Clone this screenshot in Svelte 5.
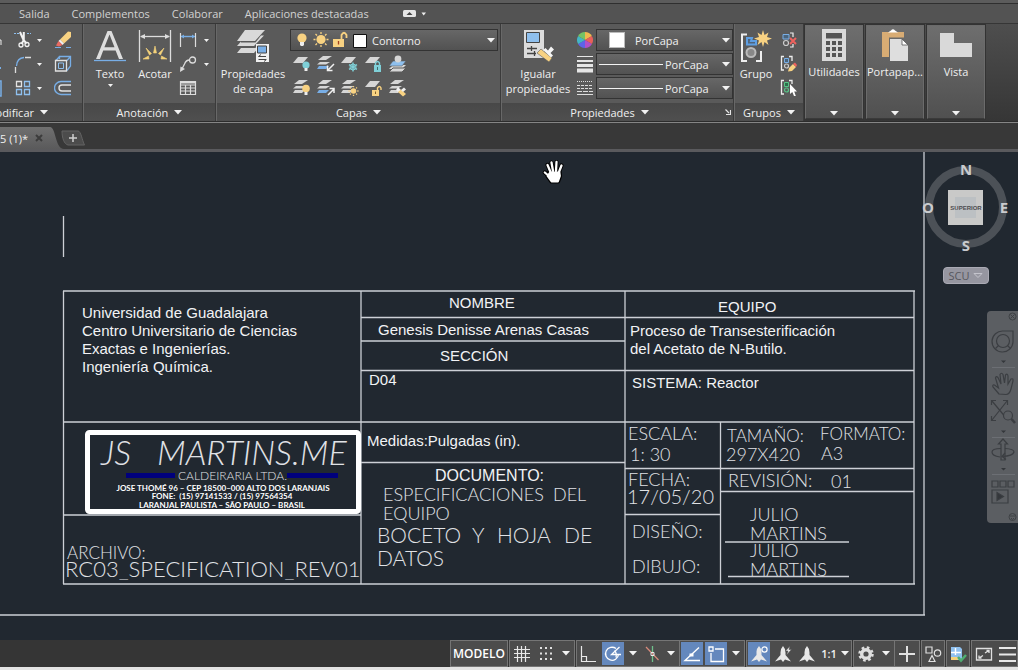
<script>
  const tabs = ['Salida', 'Complementos', 'Colaborar', 'Aplicaciones destacadas'];
  const layerTools = ['bulb-off', 'prev', 'freeze', 'lock', 'current', 'bulb-on', 'next', 'thaw', 'unlock', 'match'];

  // Line work of the title block: x1, y1, x2, y2
  const lines = [
    [63, 291, 915, 291], [63, 584, 915, 584], [63.5, 291, 63.5, 584], [914, 291, 914, 584],
    [361, 291, 361, 584], [625, 291, 625, 584], [720.5, 422, 720.5, 584],
    [361, 317.5, 914, 317.5], [361, 341, 625, 341], [361, 370.5, 914, 370.5], [63, 422, 914, 422],
    [361, 462.5, 625, 462.5], [625, 468.5, 914, 468.5], [720, 491.5, 914, 491.5], [625, 514.5, 720, 514.5],
    [63, 515, 361, 515], [725, 542, 849, 542], [728, 576.5, 849, 576.5],
    [63.5, 216, 63.5, 257], [924, 152, 924, 615], [0, 615, 925, 615]
  ];

  // Annotations in the Arial text style: x, baseline, size, text
  const arial = [
    [82, 318, 15, 'Universidad de Guadalajara'],
    [82, 336, 15, 'Centro Universitario de Ciencias'],
    [82, 354, 15, 'Exactas e Ingenierías.'],
    [82, 372, 15, 'Ingeniería Química.'],
    [449, 308, 15, 'NOMBRE'],
    [378, 335, 15, 'Genesis Denisse Arenas Casas'],
    [440, 361, 15, 'SECCIÓN'],
    [369, 385, 15, 'D04'],
    [367, 446, 15, 'Medidas:Pulgadas (in).'],
    [435, 481, 16, 'DOCUMENTO:'],
    [718, 312, 15, 'EQUIPO'],
    [630, 336, 15, 'Proceso de Transesterificación'],
    [630, 354, 15, 'del Acetato de N-Butilo.'],
    [632, 388, 15, 'SISTEMA: Reactor']
  ];

  // Annotations in the single-stroke text style
  const stroke = [
    [67, 559, 17, 'ARCHIVO:'],
    [65, 577, 22, 'RC03_SPECIFICATION_REV01'],
    [383, 501, 18, 'ESPECIFICACIONES'], [553, 501, 18, 'DEL'],
    [383, 520, 18, 'EQUIPO'],
    [377, 543, 21, 'BOCETO'], [472, 543, 21, 'Y'], [497, 543, 21, 'HOJA'], [564, 543, 21, 'DE'],
    [377, 566, 21, 'DATOS'],
    [628, 440, 18, 'ESCALA:'], [630, 461, 18, '1: 30'],
    [628, 486, 18, 'FECHA:'], [627, 504, 20, '17/05/20'],
    [632, 538, 18, 'DISEÑO:'], [632, 573, 18, 'DIBUJO:'],
    [727, 442, 17, 'TAMAÑO:'], [726, 461, 18, '297X420'],
    [820, 440, 17, 'FORMATO:'], [821, 460, 18, 'A3'],
    [728, 487, 18, 'REVISIÓN:'], [831, 488, 18, '01'],
    [750, 521, 18, 'JULIO'], [750, 540, 18, 'MARTINS'],
    [750, 557, 18, 'JULIO'], [750, 576, 18, 'MARTINS']
  ];
</script>

{#snippet caret()}
  <svg class="caret" width="8" height="5" viewBox="0 0 8 5" aria-hidden="true"><path d="M0 0H8L4 4.5Z" fill="#f2f2f2" /></svg>
{/snippet}

{#snippet caretSmall()}
  <svg class="caret" width="5" height="3" viewBox="0 0 5 3" aria-hidden="true"><path d="M0 0H5L2.5 3Z" fill="#f2f2f2" /></svg>
{/snippet}

{#snippet bulb(color)}
  <circle cx="5" cy="5" r="4.6" fill={color} /><path d="M3 9H7V12L6 13H4L3 12Z" fill="#eee" />
{/snippet}

{#snippet layerTool(kind)}
  <svg width="18" height="18" viewBox="0 0 18 18" aria-hidden="true">
    {#if kind === 'bulb-off' || kind === 'freeze' || kind === 'lock' || kind === 'unlock'}
      <path d="M5 2H15L10 8H0Z" fill="#d6d6d6" />
    {:else if kind === 'current'}
      <path d="M4 10H17L13 14H0Z" fill="#d6d6d6" /><path d="M4 13H17L13 17H0Z" fill="#d6d6d6" stroke="#5a5a5a" />
      <path d="M4 6H17L13 11H0Z" fill="#8fc0ee" stroke="#5a5a5a" stroke-width=".6" />
      <circle cx="9" cy="4" r="3.4" fill="#d6d6d6" />
    {:else}
      <path d="M6 1H15L9 5H1Z" fill="#d6d6d6" /><path d="M3 7H13L9 9.500H0Z" fill="#d6d6d6" />
      <path d="M2 11H12L9 14H0Z" fill={kind === 'prev' || kind === 'next' ? '#78aee6' : '#d6d6d6'} />
    {/if}
    {#if kind === 'bulb-off'}
      <circle cx="13" cy="10" r="3.600" fill="#7fd0d8" /><path d="M11.500 13H14.500V16H11.500Z" fill="#eee" />
    {:else if kind === 'bulb-on'}
      <circle cx="13" cy="9.500" r="3.800" fill="#f8d282" /><path d="M11.500 13H14.500V16H11.500Z" fill="#eee" />
    {:else if kind === 'prev'}
      <path d="M17 9L11 15M10.500 10.500V15.500H15.500" stroke="#f2f2f2" stroke-width="1.500" fill="none" />
    {:else if kind === 'next'}
      <path d="M11 16L17 10M12.500 9.500H17V14" stroke="#f2f2f2" stroke-width="1.500" fill="none" />
    {:else if kind === 'freeze'}
      <circle cx="12" cy="12" r="3" fill="none" stroke="#7fd0d8" />
      <path d="M12 7.500V16.500M8 9.700L16 14.300M8 14.300L16 9.700" stroke="#7fd0d8" stroke-width="1.400" />
    {:else if kind === 'thaw'}
      <circle cx="12.500" cy="12" r="2.800" fill="#f8d282" />
      <path d="M12.500 7V8.200M12.500 15.800V17M7.500 12H8.700M16.300 12H17.500M9 8.500L9.900 9.400M15.100 14.600L16 15.500M9 15.500L9.900 14.600M15.100 9.400L16 8.500" stroke="#f8d282" stroke-width="1.300" />
    {:else if kind === 'lock'}
      <path d="M9 10H16V17H9Z" fill="#7fd0d8" /><path d="M10.500 10V8Q12.500 5 14.500 8V10" fill="none" stroke="#7fd0d8" stroke-width="1.400" />
      <path d="M12.500 12V15" stroke="#3f6b70" />
    {:else if kind === 'unlock'}
      <path d="M7 11H14V17H7Z" fill="#f8d282" /><path d="M12.500 11V9Q14.500 6 16 9V11" fill="none" stroke="#f8d282" stroke-width="1.400" />
      <path d="M10.500 12.500V15" stroke="#80602a" />
    {:else if kind === 'match'}
      <path d="M9 8L12 11L9 13L7 11Z" fill="#f2f2f2" /><path d="M9 13L12 10.500L17 15L14 17.500Z" fill="#f8d282" /><path d="M12 11L15 8.500L17 10.500L14 13Z" fill="#eee" />
    {/if}
  </svg>
{/snippet}

{#snippet anno(extra)}
  <svg width="22" height="22" viewBox="0 0 22 22" aria-hidden="true">
    <path d="M11 3Q13.800 6 13.500 9.500V12L19 18.500L13 16.500L11 19L9 16.500L3 18.500L8.500 12V9.500Q8.200 6 11 3Z" fill="#e8e8e8" />
    {#if extra === 'eye'}<circle cx="16.500" cy="6.500" r="2.600" fill="#6488bd" stroke="#fff" stroke-width="1.200" />{/if}
    {#if extra === 'bolt'}<path d="M18 3L13.500 8H16L14.500 12L19.500 6.500H17Z" fill="#e8e8e8" stroke="#4c4c4c" stroke-width=".5" />{/if}
  </svg>
{/snippet}

<div class="app">
  <div class="edge"></div>
  <nav class="tabs" aria-label="Fichas">
    {#each tabs as t}<a href="#ribbon">{t}</a>{/each}
    <button class="minimize" aria-label="Minimizar">
      <svg width="24" height="9" viewBox="0 0 24 9"><rect y="1" width="13" height="7" rx="1.500" fill="#e6e6e6" /><path d="M3.500 6H9.500L6.500 3Z" fill="#444" /><path d="M18.500 3.500H23L20.700 6.500Z" fill="#eee" /></svg>
    </button>
  </nav>

  <div class="ribbon" id="ribbon">
    <section class="panel modify">
      <div class="body tools">
        <svg width="11" height="72" viewBox="0 0 11 72" aria-hidden="true">
          <path d="M0 12H1V17" stroke="#eee" fill="none" /><path d="M0 40H1" stroke="#78aee6" stroke-width="2" /><path d="M0 53H1V68H0" stroke="#78aee6" stroke-width="1.500" fill="none" />
        </svg>
        <div class="col">
          <button aria-label="Recortar"><svg width="18" height="18" viewBox="0 0 18 18">
            <path d="M0 2.500H6M13 2.500H17" stroke="#8fc0ee" stroke-dasharray="2 1" /><path d="M6 1L9.500 9L12.500 12.500M9.800 1V9L7.500 13" stroke="#f2f2f2" stroke-width="2" fill="none" />
            <circle cx="7" cy="14" r="2" fill="none" stroke="#f2f2f2" stroke-width="1.300" /><circle cx="13" cy="13.500" r="2" fill="none" stroke="#f2f2f2" stroke-width="1.300" /></svg></button>
          <button aria-label="Empalme"><svg width="18" height="18" viewBox="0 0 18 18">
            <path d="M2.500 11Q3 3 10 2.500" fill="none" stroke="#78aee6" stroke-width="1.300" /><path d="M1.500 12V18M11 2.500H17" stroke="#ddd" stroke-width="1.300" /></svg></button>
          <button aria-label="Matriz"><svg width="18" height="18" viewBox="0 0 18 18">
            <path d="M2.500 2.500H7.500V7.500H2.500Z" fill="none" stroke="#e2e2e2" stroke-width="1.300" /><path d="M10.500 2.500H15.500V7.500H10.500ZM2.500 10.500H7.500V15.500H2.500ZM10.500 10.500H15.500V15.500H10.500Z" fill="none" stroke="#8fc0ee" stroke-width="1.300" /></svg></button>
        </div>
        <div class="col carets">
          <button aria-label="Más recortar">{@render caretSmall()}</button>
          <button aria-label="Más empalme">{@render caretSmall()}</button>
          <button aria-label="Más matriz">{@render caretSmall()}</button>
        </div>
        <div class="col">
          <button aria-label="Borrar"><svg width="18" height="18" viewBox="0 0 18 18">
            <path d="M1 16.500H7M12 16.500H17" stroke="#78aee6" /><path d="M14 0.500L17 1V6L10 12.500L6 8.500Z" fill="#f8d282" /><path d="M6 8.500L10 12.500L8.500 14L4.500 10Z" fill="#f2f2f2" /><path d="M4.500 10L8.500 14L5 15.500L2 14.500Z" fill="#ea6a62" /></svg></button>
          <button aria-label="Descomponer"><svg width="18" height="18" viewBox="0 0 18 18">
            <path d="M5.500 4V1.500H16.500V11L13 15.500M2 5.500L5.500 1.500M13 5.500L16.500 1.500" fill="none" stroke="#78aee6" stroke-width="1.300" /><path d="M1.500 5.500H12.500V16H1.500Z" fill="none" stroke="#e2e2e2" stroke-width="1.300" /><path d="M4.500 8H9.500V13.500H4.500Z" fill="none" stroke="#8fc0ee" /></svg></button>
          <button aria-label="Desfase"><svg width="18" height="18" viewBox="0 0 18 18">
            <path d="M17 2.500H7A6 6 0 0 0 7 15.500H17" fill="none" stroke="#78aee6" stroke-width="1.400" /><path d="M17 6H8A3 3 0 0 0 8 12H17" fill="none" stroke="#e2e2e2" stroke-width="1.400" /></svg></button>
        </div>
      </div>
      <button class="title">Modificar {@render caret()}</button>
    </section>

    <section class="panel annotate">
      <div class="body">
        <button class="big text">
          <svg width="34" height="34" viewBox="0 0 34 34"><path d="M3 30L14.500 2H18.500L30 30H26L22.600 21.500H10.200L7 30ZM11.400 18.300H21.500L16.500 5.500Z" fill="#dedede" fill-rule="evenodd" /><path d="M1 31.500H33" stroke="#78aee6" stroke-width="1.300" /></svg>
          <span>Texto</span>{@render caretSmall()}
        </button>
        <button class="big dim">
          <svg width="34" height="34" viewBox="0 0 34 34"><path d="M1.500 1V33M32.500 1V33" stroke="#ddd" stroke-width="1.300" /><path d="M3 7.500H31" stroke="#ddd" stroke-width="1.300" /><path d="M2 7.500L7 5V10ZM32 7.500L27 5V10Z" fill="#ddd" />
            <path d="M17 17L18.500 24H15.500ZM8 19L13.500 24.500L11.500 26ZM26 19L20.500 24.500L22.500 26ZM5 30L10.500 27L11 30ZM29 30L23.500 27L23 30Z" fill="#f4d27a" stroke="#f4d27a" stroke-width=".6" /></svg>
          <span>Acotar</span>
        </button>
        <div class="col">
          <button aria-label="Cota lineal"><svg width="18" height="18" viewBox="0 0 18 18"><path d="M1.500 2V16M16.500 2V16" stroke="#ddd" stroke-width="1.200" /><path d="M2 5.500H16" stroke="#78aee6" stroke-width="1.400" /><path d="M2 5.500L5 3.500V7.500ZM16 5.500L13 3.500V7.500Z" fill="#78aee6" /></svg></button>
          <button aria-label="Directriz"><svg width="18" height="18" viewBox="0 0 18 18"><circle cx="13.500" cy="5" r="3" fill="none" stroke="#ddd" stroke-width="1.300" /><path d="M10.500 5Q7 5 5.500 9L3 14" fill="none" stroke="#ddd" stroke-width="1.300" /><path d="M1 17L1.500 11.500L6 14Z" fill="#ddd" /></svg></button>
          <button aria-label="Tabla"><svg width="18" height="18" viewBox="0 0 18 18"><path d="M1.500 2.500H16.500V15.500H1.500ZM1.500 6H16.500M1.500 9H16.500M1.500 12H16.500M6.500 6V15.500M11.500 6V15.500" fill="none" stroke="#ddd" stroke-width="1.200" /><path d="M1.500 3.500H16.500" stroke="#ddd" stroke-width="2" /></svg></button>
        </div>
        <div class="col carets">
          <button aria-label="Más cotas">{@render caretSmall()}</button>
          <button aria-label="Más directrices">{@render caretSmall()}</button>
        </div>
      </div>
      <button class="title">Anotación {@render caret()}</button>
    </section>

    <section class="panel layers">
      <div class="body">
        <button class="big wide">
          <svg width="34" height="34" viewBox="0 0 34 34"><path d="M9 1H29L19 12H1Z" fill="#d9d9d9" /><path d="M5 12.500L1 17H18L28 6.500H25L19.500 13.500H5Z" fill="#d9d9d9" /><path d="M5 19L1 24H18L22 19.500V15L19.500 19Z" fill="#d9d9d9" />
            <path d="M20 15H33V33H20Z" fill="#efefef" /><path d="M21.500 17H30.500V24H21.500Z" fill="#78aee6" stroke="#444" /><path d="M22.500 27.500H30M22.500 30.500H30M25 25.500L22.500 27.500M28 32.500L30.500 30.500" stroke="#444" /></svg>
          <span>Propiedades<br />de capa</span>
        </button>
        <div class="layerside">
          <div class="combo">
            <svg width="72" height="18" viewBox="0 0 72 18" aria-hidden="true">
              <g transform="translate(2 2)">{@render bulb('#f8d282')}</g>
              <circle cx="26" cy="8.500" r="4.600" fill="#f8d282" /><path d="M26 1V3M26 14V16M18.500 8.500H20.500M31.500 8.500H33.500M20.500 3L22 4.500M31.500 3L30 4.500M20.500 14L22 12.500M31.500 14L30 12.500" stroke="#f8d282" stroke-width="1.300" />
              <path d="M38 8H49V16H38Z" fill="#f8d282" /><path d="M46.500 8V4Q49 -0.500 51.500 4V7" fill="none" stroke="#f8d282" stroke-width="1.800" /><path d="M43.500 10V13.500" stroke="#a04020" stroke-width="1.300" />
              <path d="M58.500 3.500H71.500V16.500H58.500Z" fill="#fff" stroke="#111" />
            </svg>
            <select aria-label="Capa"><option>Contorno</option></select>
            {@render caret()}
          </div>
          <div class="layergrid">
            {#each layerTools as k}<button aria-label={k}>{@render layerTool(k)}</button>{/each}
          </div>
        </div>
      </div>
      <button class="title">Capas {@render caret()}</button>
    </section>

    <section class="panel props">
      <div class="body">
        <button class="big wide">
          <svg width="34" height="34" viewBox="0 0 34 34"><path d="M3 1H23V29H3Z" fill="#dcdcdc" /><path d="M5.500 3.500H18.500V13.500H5.500Z" fill="#8fc0ee" stroke="#444" /><path d="M6 19.500H16M6 24.500H15M10.500 17V22M13.500 22V27" stroke="#444" stroke-width="1.300" />
            <path d="M16 24L20 20L31 29L28 33Z" fill="#f8d282" stroke="#5a5a5a" stroke-width=".6" /><path d="M22 21L24.500 19L27 21.500L30 17.500L33 20.500L29.500 24L32 26.500L30 28.500Z" fill="#f5f5f5" /></svg>
          <span>Igualar<br />propiedades</span>
        </button>
        <div class="proprows">
          <svg width="18" height="18" viewBox="0 0 18 18" aria-hidden="true">
            <path d="M9 9V1A8 8 0 0 1 15.900 5Z" fill="#f0b84e" /><path d="M9 9L15.900 5A8 8 0 0 1 15.900 13Z" fill="#e8605a" /><path d="M9 9L15.900 13A8 8 0 0 1 9 17Z" fill="#b24fc8" /><path d="M9 9V17A8 8 0 0 1 2.100 13Z" fill="#5d63e8" /><path d="M9 9L2.100 13A8 8 0 0 1 2.100 5Z" fill="#43b5c4" /><path d="M9 9L2.100 5A8 8 0 0 1 9 1Z" fill="#74c365" />
          </svg>
          <div class="combo color"><i></i><select aria-label="Color"><option>PorCapa</option></select>{@render caret()}</div>
          <svg width="18" height="18" viewBox="0 0 18 18" aria-hidden="true"><path d="M1 1.500H17" stroke="#e6e6e6" /><path d="M1 6H17" stroke="#e6e6e6" stroke-width="2" /><path d="M1 10.500H17" stroke="#e6e6e6" stroke-width="3" /><path d="M1 15.500H17" stroke="#e6e6e6" stroke-width="4" /></svg>
          <div class="combo line"><b></b><select aria-label="Grosor de línea"><option>PorCapa</option></select>{@render caret()}</div>
          <svg width="18" height="18" viewBox="0 0 18 18" aria-hidden="true"><path d="M1 2.500H17" stroke="#ddd" stroke-dasharray="1 1" /><path d="M1 6.500H17M1 9.500H17" stroke="#ddd" stroke-dasharray="3 1" /><path d="M1 12.500H17" stroke="#ddd" stroke-dasharray="5 1" /><path d="M1 15.500H17" stroke="#ddd" /></svg>
          <div class="combo line"><b></b><select aria-label="Tipo de línea"><option>PorCapa</option></select>{@render caret()}</div>
        </div>
      </div>
      <div class="title"><button>Propiedades {@render caret()}</button>
        <button class="launcher" aria-label="Abrir propiedades"><svg width="6" height="6" viewBox="0 0 6 6"><path d="M0.500 0.500L4 4M5.500 1V5.500H1" fill="none" stroke="#e6e6e6" stroke-width="1.200" /></svg></button></div>
    </section>

    <section class="panel groups">
      <div class="body">
        <button class="big group">
          <svg width="34" height="34" viewBox="0 0 34 34"><path d="M8 5.500H3V32H8M17 32H22V22" fill="none" stroke="#efefef" stroke-width="2" /><path d="M8 9H13L12 12H17V15.500H8Z" fill="#50657c" stroke="#5f9fe2" stroke-width="2" /><circle cx="12" cy="23.500" r="4.500" fill="#888" stroke="#bbb" stroke-width="2" />
            <path d="M24 1L25.500 6L29.500 3.500L28 8L33 9.500L28 11.500L29.500 16L25.500 13L24 18L22.500 13L18.500 16L20 11.500L15 9.500L20 8L18.500 3.500L22.500 6Z" fill="#f8d282" /></svg>
          <span>Grupo</span>
        </button>
        <div class="col">
          <button aria-label="Desagrupar"><svg width="18" height="18" viewBox="0 0 18 18"><path d="M3 3.500H9V8H3Z" fill="#4a647c" stroke="#78aee6" /><circle cx="6" cy="12" r="2.500" fill="none" stroke="#ccc" stroke-width="1.200" /><path d="M10 2H13V6M13 13V16H10" fill="none" stroke="#eee" stroke-width="1.200" /><path d="M10 7L16 13M16 7L10 13" stroke="#ee625e" stroke-width="2" /></svg></button>
          <button aria-label="Editar grupo"><svg width="18" height="18" viewBox="0 0 18 18"><path d="M4 1.500H1.500V15H4M9 1.500H12V6" fill="none" stroke="#eee" stroke-width="1.300" /><path d="M4.500 3.500H8.500V7.500H4.500Z" fill="#4a647c" stroke="#78aee6" /><circle cx="6.500" cy="11" r="2" fill="none" stroke="#ccc" stroke-width="1.200" /><path d="M8 16.500L9 13L13 9L16 12L12 16Z" fill="#f8d282" /><path d="M13 9L15 7.500L17 10L16 12Z" fill="#ee625e" /></svg></button>
          <button aria-label="Selección de grupo"><svg width="18" height="18" viewBox="0 0 18 18"><path d="M4 1.500H1.500V15H4M9 1.500H12V5" fill="none" stroke="#eee" stroke-width="1.300" /><path d="M4.500 3.500H8.500V7.500H4.500Z" fill="#2f6d4c" stroke="#56c587" /><circle cx="6.500" cy="11" r="2" fill="none" stroke="#56c587" stroke-width="1.200" /><path d="M10 5V15L12.300 13L14 17H15.800L14.200 12.500H17Z" fill="#fff" /></svg></button>
        </div>
      </div>
      <button class="title">Grupos {@render caret()}</button>
    </section>

    <div class="collapsed">
      <button>
        <svg width="34" height="34" viewBox="0 0 34 34"><path d="M5 1H29V33H5Z" fill="#d9d9d9" /><path d="M9 5H25V10.500H9Z" fill="#555" /><path d="M9 13H13V17H9ZM15 13H19V17H15ZM21 13H25V17H21ZM9 19H13V23H9ZM15 19H19V23H15ZM21 19H25V23H21ZM9 25H13V29H9ZM15 25H19V29H15ZM21 25H25V29H21Z" fill="#555" /></svg>
        <span>Utilidades</span>{@render caret()}
      </button>
      <button>
        <svg width="34" height="34" viewBox="0 0 34 34"><path d="M4 4H26V9.500H11V29H4Z" fill="#d8ac74" /><path d="M10 4.500L13 2.500Q15 0 17 2.500L20 4.500Z" fill="#fff" /><path d="M12 11H24L30 17V33H12Z" fill="#dedede" /><path d="M24 11V17H30Z" fill="#fff" stroke="#555" stroke-width=".8" /></svg>
        <span>Portapap...</span>{@render caret()}
      </button>
      <button>
        <svg width="34" height="34" viewBox="0 0 34 34"><path d="M1 5H15V15H33V29H1Z" fill="#d9d9d9" /></svg>
        <span>Vista</span>{@render caret()}
      </button>
    </div>
  </div>

  <div class="files">
    <div class="file"><span>5 (1)*</span>
      <button aria-label="Cerrar dibujo"><svg width="8" height="8" viewBox="0 0 8 8"><path d="M1 1L7 7M7 1L1 7" stroke="#3c3c3c" stroke-width="2" /></svg></button></div>
    <svg class="curve" width="14" height="22" viewBox="0 0 14 22" aria-hidden="true"><defs><linearGradient id="tabfade" x2="0" y2="1"><stop stop-color="#707070" /><stop offset="1" stop-color="#5a5a5b" /></linearGradient></defs><path d="M0 0C6 0 5 22 14 22H0Z" fill="url(#tabfade)" /></svg>
    <button class="add" aria-label="Nuevo dibujo"><svg width="24" height="16" viewBox="0 0 24 16"><path d="M1 1H17C20 1 21 10 23.500 15H7C3 14 1 8 1 1Z" fill="#4c4c4c" stroke="#636363" /><path d="M12 4V12M8 8H16" stroke="#d0d0d0" stroke-width="1.500" /></svg></button>
  </div>

  <main class="canvas">
    <svg class="drawing" width="930" height="488" viewBox="0 152 930 488" aria-label="Cajetín">
      <g stroke="#cdd0d6" stroke-width="1.300" fill="none">
        {#each lines as [x1, y1, x2, y2]}<path d="M{x1} {y1}L{x2} {y2}" />{/each}
      </g>
      <rect x="87.500" y="432.500" width="271" height="79" rx="2" fill="none" stroke="#fff" stroke-width="5" />
      <path d="M126 473H175V478H126ZM287 473H338V478H287Z" fill="#00007c" />
      <g class="logo">
        <text x="101" y="465" class="brand">JS</text>
        <text x="157" y="465" class="brand">MARTINS.ME</text>
        <text x="178" y="480" class="trade">CALDEIRARIA LTDA.</text>
        <g class="small" text-anchor="middle">
          <text x="223" y="491">JOSE THOMÉ 96 – CEP 18500–000 ALTO DOS LARANJAIS</text>
          <text x="222" y="499">FONE: &nbsp;(15) 97141533 / (15) 97564354</text>
          <text x="222" y="508">LARANJAL PAULISTA – SÃO PAULO – BRASIL</text>
        </g>
      </g>
      <g class="arial">{#each arial as [x, y, s, t]}<text {x} {y} font-size={s}>{t}</text>{/each}</g>
      <g class="stroke">{#each stroke as [x, y, s, t]}<text {x} {y} font-size={s}>{t}</text>{/each}</g>
    </svg>

    <svg class="cursor" width="24" height="26" viewBox="0 0 24 26" aria-hidden="true" stroke-linecap="round" stroke-linejoin="round">
      <path d="M8.500 13L5.500 6M11 12L9.500 3.500M14 12L14.500 3M17 13L19.500 6.500M8 18L2.800 13.500M8 12H17.500L18 17L16 22.500H9.500L5.500 17Z" fill="#000" stroke="#000" stroke-width="4.200" />
      <path d="M8.500 13L5.500 6M11 12L9.500 3.500M14 12L14.500 3M17 13L19.500 6.500M8 18L2.800 13.500" fill="none" stroke="#fff" stroke-width="2.300" />
      <path d="M8 13.500H17.500L18 17L16 22.500H9.500L5.500 17Z" fill="#fff" stroke="#fff" stroke-width="1.800" />
    </svg>

    <div class="cube">
      <svg width="88" height="94" viewBox="0 0 88 94">
        <circle cx="44" cy="47" r="37" fill="none" stroke="#4c5157" stroke-width="8" />
        <path d="M26 30H61V65H26Z" fill="#c9c9c8" /><path d="M33 37H54V58H33Z" fill="#bcc0c3" />
        <g text-anchor="middle">
          <text class="face" x="44" y="50">SUPERIOR</text>
          <text x="44" y="15">N</text><text x="6" y="53">O</text><text x="82" y="53">E</text><text x="44" y="91">S</text>
        </g>
      </svg>
      <button class="scu">SCU <svg width="10" height="6" viewBox="0 0 10 6"><path d="M1 .5H9L5 4.500Z" fill="none" stroke="#c4c4cc" /></svg></button>
    </div>

    <div class="navbar">
      <svg width="31" height="212" viewBox="0 0 31 212" aria-label="Barra de navegación" fill="none" stroke="#3b3e42" stroke-width="1.200">
        <g stroke-width=".9"><circle cx="25.500" cy="5.500" r="3.500" /><path d="M23.500 3.500L27.500 7.500M27.500 3.500L23.500 7.500" /><circle cx="25.500" cy="206" r="3.500" /><path d="M23 205H28M24 207L25.500 208.500L27 207" /></g>
        <path d="M16 20H26V31A10.500 10.500 0 1 1 16 20Z" /><circle cx="16" cy="30" r="6.500" /><path d="M11.500 34.500L8.500 37.500M20.500 34.500L23.500 37.500" />
        <path d="M14 49.500H19L16.500 52ZM14 119.500H19L16.500 122ZM14 157H19L16.500 159.500Z" fill="#34373b" stroke="none" />
        <path d="M5 56.500H28M5 126.500H28M5 163.500H28" stroke="#6c6f74" stroke-width="1" />
        <path d="M12 83L6 76Q5 73.500 7.500 74L11.500 77L8.500 67Q9 64.500 11 66.500L14 73L13 63.500Q14.500 61 16 63.500L17.500 72L18.500 64Q20.500 62 21 65L21 73L24 68Q26.500 67 26 70L24 78Q22.500 83.500 19 83.500Z" />
        <path d="M5 90L20 108M20 90L5 109M4.500 94V89.500H9M16 89.500H20.500V94M4.500 105V109.500H9" /><circle cx="21" cy="104.500" r="4.500" fill="#5b5e62" /><path d="M24.500 108L28 112" stroke-width="2.500" />
        <path d="M14 149V133H11.500L16 128L20.500 133H18V149Z" /><path d="M13 146Q5 145 5 141Q5 137.500 14 137.500M18 137.500Q27 138 27 141Q26 145 15 145.500M18 142L15 145.500L19 148.500" />
        <path d="M5 170H11V176H5ZM13 170H19V176H13ZM21 170H27V176H21ZM5 179H21V192H5Z" /><path d="M10 181.500V189.500L16.500 185.500Z" fill="#34373b" />
      </svg>
    </div>
  </main>

  <footer class="status">
    <div class="grp"><button class="model">MODELO</button></div>
    <div class="grp">
      <button aria-label="Rejilla"><svg width="22" height="22" viewBox="0 0 22 22"><path d="M6.500 3V19M10.500 3V19M14.500 3V19M3 6.500H19M3 10.500H19M3 14.500H19" stroke="#e8e8e8" stroke-width="1.200" /></svg></button>
      <button aria-label="Forzado"><svg width="22" height="22" viewBox="0 0 22 22"><path d="M5 4H7V6H5ZM10 4H12V6H10ZM15 4H17V6H15ZM5 9.500H7V11.500H5ZM10 9.500H12V11.500H10ZM15 9.500H17V11.500H15ZM5 15H7V17H5ZM10 15H12V17H10ZM15 15H17V17H15Z" fill="#e0e0e0" /></svg></button>
      <button class="drop" aria-label="Opciones de forzado">{@render caret()}</button>
    </div>
    <div class="grp">
      <button aria-label="Orto"><svg width="22" height="22" viewBox="0 0 22 22"><path d="M3.500 3V18.500H18M3.500 13.500H8.500V18.500" fill="none" stroke="#e8e8e8" stroke-width="1.200" /></svg></button>
      <button aria-label="Polar" class="on"><svg width="22" height="22" viewBox="0 0 22 22"><path d="M14 5.600A6.500 6.500 0 1 0 16.500 11.500M19 11.500H9.500L17.500 4M12.500 7.500Q15 10 14 14.500" fill="none" stroke="#fff" stroke-width="1.300" /></svg></button>
      <button class="drop" aria-label="Opciones polares">{@render caret()}</button>
      <button class="iso" aria-label="Isodibujo"><svg width="18" height="22" viewBox="0 0 18 22"><path d="M3 4L15.500 17" stroke="#d98b7c" stroke-width="1.200" /><path d="M9.500 3V9M9.500 13V19" stroke="#6fc08c" stroke-width="1.300" /><path d="M8 9.500H11V12.500H8Z" fill="none" stroke="#e8e8e8" /></svg></button>
      <button class="drop sep" aria-label="Opciones de isodibujo">{@render caret()}</button>
      <button aria-label="Rastreo" class="on"><svg width="22" height="22" viewBox="0 0 22 22"><path d="M18 4.500L4 17.500H19" fill="none" stroke="#fff" stroke-width="1.400" /><path d="M8.500 10.500H12.500V13.500H8.500Z" fill="#fff" /></svg></button>
      <button aria-label="Referencia a objetos" class="on"><svg width="22" height="22" viewBox="0 0 22 22"><path d="M4 4H8V8H4ZM10 6H18.500V18.500H6V10" fill="none" stroke="#fff" stroke-width="1.300" /></svg></button>
      <button class="drop" aria-label="Opciones de referencia">{@render caret()}</button>
    </div>
    <div class="grp">
      <button aria-label="Visibilidad de anotación" class="on">{@render anno('eye')}</button>
      <button aria-label="Escala automática">{@render anno('bolt')}</button>
      <button aria-label="Escala de anotación">{@render anno('')}</button>
      <button class="scale">1:1 {@render caret()}</button>
    </div>
    <div class="grp">
      <button aria-label="Espacio de trabajo"><svg width="22" height="22" viewBox="0 0 22 22"><circle cx="11" cy="11" r="4.300" fill="none" stroke="#dedede" stroke-width="3.400" /><circle cx="11" cy="11" r="6.500" fill="none" stroke="#dedede" stroke-width="2.500" stroke-dasharray="2.600 2.505" /></svg></button>
      <button class="drop sep" aria-label="Opciones de espacio">{@render caret()}</button>
      <button aria-label="Monitor"><svg width="22" height="22" viewBox="0 0 22 22"><path d="M11 3V19M3 11H19" stroke="#e0e0e0" stroke-width="2" /></svg></button>
    </div>
    <div class="grp"><button class="tight" aria-label="Aislar objetos"><svg width="22" height="22" viewBox="0 0 22 22"><path d="M4 4H10V10H4ZM10 12.500L13 18.500H7Z" fill="none" stroke="#e0e0e0" stroke-width="1.200" /><circle cx="15.500" cy="10" r="3.200" fill="none" stroke="#e0e0e0" stroke-width="1.200" /></svg></button></div>
    <div class="grp"><button class="tight" aria-label="Rendimiento gráfico"><svg width="22" height="22" viewBox="0 0 22 22"><path d="M4 4H13L15 6V17H4Z" fill="#8fc0ee" /><path d="M4 14H11V17H4Z" fill="#f4d27a" /><path d="M8.500 5V12M4 9.500H14" stroke="#fff" stroke-width="1.400" /><path d="M11 14L14 17.500L19 12" fill="none" stroke="#4fae72" stroke-width="2.500" /></svg></button></div>
    <div class="grp">
      <button aria-label="Pantalla completa"><svg width="22" height="22" viewBox="0 0 22 22"><path d="M3.500 5.500H18.500V17H3.500Z" fill="none" stroke="#e0e0e0" stroke-width="1.300" /><path d="M12 10L16 7.500M13.500 7.500H16V10M10 12.500L6 15M6 12.500V15H8.500" fill="none" stroke="#e0e0e0" stroke-width="1.300" /></svg></button>
      <button class="menu" aria-label="Personalización"><svg width="18" height="22" viewBox="0 0 18 22"><path d="M1 5H18M1 11.500H18M1 18H18" stroke="#e8e8e8" stroke-width="2" /></svg></button>
    </div>
  </footer>
</div>

<style>
  :global(body) { margin: 0; background: #212830; }
  .app { display: flex; flex-direction: column; min-height: 100vh; overflow: hidden; font: 11px/15px "Open Sans", "Noto Sans", sans-serif; color: #f0f0f0; }
  button { font: inherit; color: inherit; background: none; border: 0; padding: 0; margin: 0; display: flex; align-items: center; justify-content: center; }
  svg { flex: none; display: block; }
  .edge { height: 3px; background: #5c5c5c; border-bottom: 1px solid #2f2f2f; }
  .tabs { display: flex; align-items: center; gap: 22px; height: 19px; padding-left: 19px; background: #535353; border-bottom: 1px solid #363636; white-space: nowrap; }
  .tabs a { color: #d2d2d2; text-decoration: none; }
  .minimize { margin-left: 12px; }

  .ribbon { display: flex; height: 97px; background: linear-gradient(#4e4e4e, #363636); border-bottom: 1px solid #2c2c2c; }
  .panel { display: flex; flex-direction: column; background: #5a5a5a; border-right: 1px solid #3b3b3b; border-left: 1px solid #686868; box-sizing: border-box; overflow: hidden; flex: none; }
  .modify { width: 83px; border-left: 0; }
  .annotate { width: 133px; }
  .layers { width: 285px; }
  .props { width: 233px; }
  .groups { width: 70px; }
  .body { display: flex; flex: 1; padding-top: 4px; }
  .title { display: flex; align-items: center; justify-content: center; gap: 6px; height: 18px; background: linear-gradient(#484848, #4f4f4f); width: 100%; white-space: nowrap; }
  .title button { gap: 6px; flex: 1; }
  .title .launcher { flex: none; width: 10px; }
  .modify .title { justify-content: flex-end; padding-right: 34px; }
  .col { display: grid; grid-template-rows: repeat(3, 24px); width: 24px; }
  .carets { width: 10px; }
  .tools .col:last-child { width: 38px; }
  .annotate .col { width: 28px; }
  .annotate .carets { width: 8px; }
  .big { flex-direction: column; justify-content: flex-start; padding-top: 1px; gap: 3px; white-space: nowrap; align-self: flex-start; }
  .wide { width: 72px; }
  .text { width: 52px; }
  .dim { width: 38px; }
  .group { width: 42px; }

  .combo { display: flex; align-items: center; box-sizing: border-box; height: 22px; padding: 0 2px 0 4px; border: 1px solid #333; background: linear-gradient(#676767, #525252); }
  select { appearance: none; flex: 1; min-width: 0; border: 0; padding: 0 0 0 5px; background: none; font: inherit; color: inherit; }
  .layerside { flex: 1; padding: 1px 2px 0 1px; }
  .layergrid { display: grid; grid-template-columns: repeat(5, 24px); grid-auto-rows: 24px; padding: 1px 0 0; }
  .proprows { flex: 1; display: grid; grid-template-columns: 18px 1fr; grid-auto-rows: 24px; column-gap: 2px; align-items: center; padding-left: 2px; }
  .color i { width: 14px; height: 14px; margin: 0 5px 0 8px; background: #fff; border: 1px solid #bbb; }
  .line b { width: 64px; height: 1px; background: #f4f4f4; margin-left: -2px; }
  .line select { padding-left: 2px; }

  .collapsed { display: flex; gap: 3px; padding: 1px 0 2px; margin-left: 1px; }
  .collapsed button { flex-direction: column; justify-content: flex-start; width: 58px; box-sizing: border-box; padding: 2px 0; gap: 2px; border: 1px solid #6b6b6b; border-bottom-color: #3a3a3a; background: linear-gradient(#6e6e6e, #505050); outline: 1px solid #333; }
  .collapsed .caret { margin-top: auto; }

  .files { display: flex; align-items: flex-end; height: 26px; background: #383838; border-top: 1px solid #858585; border-bottom: 3px solid #5a5a5d; white-space: nowrap; }
  .file { display: flex; align-items: center; justify-content: space-between; width: 50px; height: 22px; box-sizing: border-box; background: linear-gradient(#707070, #5a5a5b); }
  .file button { width: 22px; }
  .add { margin: 0 0 3px -3px; }

  .canvas { position: relative; flex: 1; min-height: 488px; background: #212830; overflow: hidden; }
  .cursor { position: absolute; left: 542px; top: 7px; }
  .arial { font-family: "Liberation Sans", Arial, sans-serif; fill: #f2f3f5; }
  .stroke, .logo { font-family: Lato, "Open Sans", sans-serif; font-weight: 300; fill: #e0e2e6; }
  .brand { font-size: 34px; font-style: italic; }
  .trade { font-size: 12px; }
  .small { font-size: 8px; font-weight: 700; fill: #fff; }
  .cube { position: absolute; right: 8px; top: 8px; width: 88px; display: flex; flex-direction: column; align-items: center; gap: 13px; }
  .cube text { font: 700 15px "Open Sans", sans-serif; fill: #c9cbce; }
  .cube .face { font: 700 6px "Liberation Sans", sans-serif; fill: #4c4c50; }
  .scu { width: 46px; height: 17px; gap: 4px; border-radius: 4px; background: #9696a0; border: 1px solid #aaaab4; box-sizing: border-box; color: #56565e; }
  .navbar { position: absolute; right: 0; top: 159px; background: #5b5e62; border-radius: 4px 0 0 4px; }

  .status { display: flex; justify-content: flex-end; gap: 1px; height: 27px; background: #353535; border-bottom: 3px solid #e4e4e4; }
  .grp { display: flex; align-items: center; box-sizing: border-box; border: 1px solid #757575; background: #4c4c4c; }
  .grp button { width: 24px; height: 100%; }
  .grp .on { background: #6488bd; background-clip: content-box; padding: 1px; box-sizing: border-box; }
  .grp .model { width: 56px; color: #fff; font-weight: 600; font-size: 12px; }
  .grp .drop { width: 16px; }
  .grp .iso { width: 22px; }
  .grp .sep { border-right: 1px solid #757575; width: 17px; }
  .grp .scale { width: 32px; gap: 4px; font-weight: 600; }
  .grp .tight { width: 22px; }
  .grp .menu { width: 21px; }
</style>
